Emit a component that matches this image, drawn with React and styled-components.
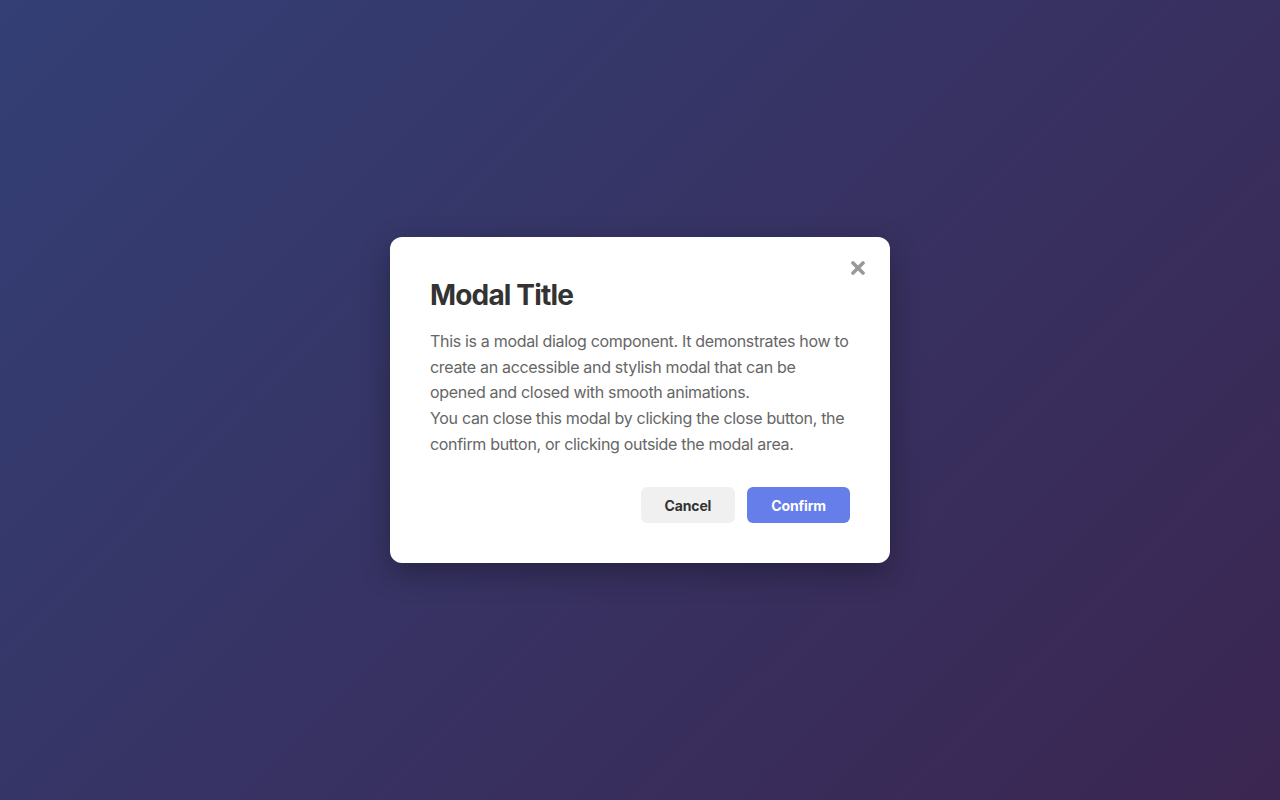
import styled, { createGlobalStyle } from 'styled-components';

const GlobalStyle = createGlobalStyle`
  html, body {
    margin: 0;
    padding: 0;
  }
  body {
    font-family: Inter, "Liberation Sans", sans-serif;
  }
`;

// full page gradient with the dark overlay baked in
const Backdrop = styled.div`
  width: 100vw;
  height: 100vh;
  display: flex;
  align-items: center;
  justify-content: center;
  background: linear-gradient(135deg, #333f75 0%, #3b2651 100%);
`;

const Dialog = styled.div`
  position: relative;
  width: 500px;
  box-sizing: border-box;
  padding: 40px;
  background: #fff;
  border-radius: 12px;
  box-shadow: 0 10px 30px rgba(0, 0, 0, 0.3);
`;

const CloseButton = styled.button`
  position: absolute;
  top: 21px;
  right: 22px;
  width: 20px;
  height: 20px;
  padding: 0;
  border: none;
  background: none;
  display: flex;
  align-items: center;
  justify-content: center;
  cursor: pointer;
  color: #999;
`;

const Title = styled.h2`
  margin: 0 0 16px;
  font-size: 28px;
  line-height: 1.3;
  font-weight: 700;
  letter-spacing: -0.03em;
  color: #333;
`;

const Body = styled.p`
  margin: 0;
  font-size: 16px;
  line-height: 1.6;
  letter-spacing: -0.02em;
  color: #666;
`;

const Footer = styled.div`
  display: flex;
  justify-content: flex-end;
  gap: 12px;
  margin-top: 30px;
`;

const Button = styled.button`
  height: 36px;
  padding: 0 24px;
  border: none;
  border-radius: 6px;
  font-family: inherit;
  font-size: 14px;
  font-weight: 700;
  letter-spacing: -0.01em;
  cursor: pointer;
  background: ${p => (p.$primary ? '#667eea' : '#f0f0f0')};
  color: ${p => (p.$primary ? '#fff' : '#333')};
`;

const CrossIcon = () => (
  <svg width="14" height="14" viewBox="0 0 14 14">
    <path d="M2 2 L12 12 M12 2 L2 12" stroke="currentColor" strokeWidth="3.6" strokeLinecap="round" />
  </svg>
);

const App = () => {
  return (
    <>
      <GlobalStyle />
      <Backdrop>
        <Dialog role="dialog" aria-modal="true">
          <CloseButton aria-label="Close">
            <CrossIcon />
          </CloseButton>
          <Title>Modal Title</Title>
          <Body>
            This is a modal dialog component. It demonstrates how to create an accessible and stylish modal that can be opened and closed with smooth animations.
            <br />
            You can close this modal by clicking the close button, the confirm button, or clicking outside the modal area.
          </Body>
          <Footer>
            <Button>Cancel</Button>
            <Button $primary>Confirm</Button>
          </Footer>
        </Dialog>
      </Backdrop>
    </>
  );
};

export default App;
